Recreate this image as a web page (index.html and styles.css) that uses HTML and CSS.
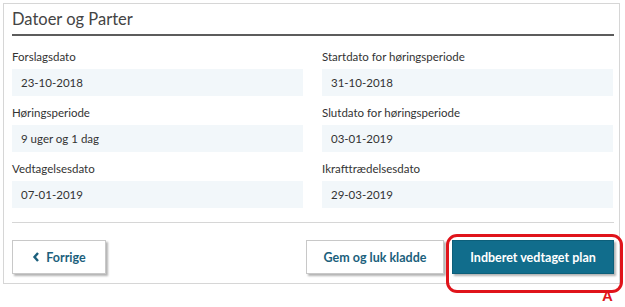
FILE: index.html
```html
<!DOCTYPE html>
<html lang="da">
<head>
    <meta charset="UTF-8">
    <title>Datoer og Parter</title>
    <link rel="stylesheet" href="styles.css">
</head>
<body>

    <div class="panel">
        <h2 class="panel-title">Datoer og Parter</h2>

        <div class="fields">
            <div class="field">
                <div class="field-label">Forslagsdato</div>
                <div class="field-value">23-10-2018</div>
            </div>
            <div class="field">
                <div class="field-label">Startdato for høringsperiode</div>
                <div class="field-value">31-10-2018</div>
            </div>
            <div class="field">
                <div class="field-label">Høringsperiode</div>
                <div class="field-value">9 uger og 1 dag</div>
            </div>
            <div class="field">
                <div class="field-label">Slutdato for høringsperiode</div>
                <div class="field-value">03-01-2019</div>
            </div>
            <div class="field">
                <div class="field-label">Vedtagelsesdato</div>
                <div class="field-value">07-01-2019</div>
            </div>
            <div class="field">
                <div class="field-label">Ikrafttrædelsesdato</div>
                <div class="field-value">29-03-2019</div>
            </div>
        </div>

        <!-- Knapper -->
        <div class="actions">
            <button class="btn btn-outline btn-back">
                <svg class="chevron" width="8" height="10" viewBox="0 0 8 10"><path d="M6 1 L2.5 5 L6 9" fill="none" stroke="currentColor" stroke-width="2.4"/></svg>
                Forrige
            </button>
            <div class="actions-right">
                <button class="btn btn-outline">Gem og luk kladde</button>
                <div class="highlight-wrap">
                    <button class="btn btn-primary">Indberet vedtaget plan</button>
                    <div class="highlight"></div>
                    <span class="highlight-label">A</span>
                </div>
            </div>
        </div>
    </div>

</body>
</html>
```

FILE: styles.css
```css
html, body {
    height: 307px;
}
body {
    margin: 0;
    background-color: #ffffff;
    font-family: 'Lato', 'Noto Sans', sans-serif;
    color: #333;
}
.panel {
    margin: 3px;
    width: 617px;
    height: 281px;
    box-sizing: border-box;
    border: 1px solid #d6d6d6;
    padding: 0 5px 0 8px;
}
.panel-title {
    margin: 0;
    font-size: 16.5px;
    font-weight: 400;
    color: #444;
    line-height: 20px;
    padding-top: 5px;
    padding-bottom: 5px;
    border-bottom: 2px solid #5c5c5c;
}
.fields {
    display: grid;
    grid-template-columns: 291px 291px;
    column-gap: 19px;
    row-gap: 10px;
    margin-top: 14px;
    padding-bottom: 14px;
    border-bottom: 1px solid #d6d6d6;
}
.field-label {
    font-size: 11.5px;
    line-height: 14px;
    color: #333;
    margin-bottom: 5px;
}
.field-value {
    height: 27px;
    line-height: 27px;
    background-color: #f2f7fa;
    padding-left: 9px;
    font-size: 11.5px;
    color: #333;
}
.actions {
    display: flex;
    justify-content: space-between;
    margin-top: 17px;
}
.actions-right {
    display: flex;
    gap: 8px;
}
.btn {
    height: 34px;
    box-sizing: border-box;
    font-family: 'Lato', 'Noto Sans', sans-serif;
    font-weight: 700;
    font-size: 12.5px;
    cursor: pointer;
    box-shadow: 2px 2px 2px rgba(0, 0, 0, 0.3);
}
.btn-outline {
    background-color: #fff;
    border: 1px solid #c8c8c8;
    color: #1b5f7c;
}
.btn-back {
    width: 94px;
    display: flex;
    align-items: center;
    justify-content: center;
    gap: 6px;
}
.actions-right .btn-outline {
    width: 138px;
}
.btn-primary {
    width: 162px;
    background-color: #116d8c;
    border: 1px solid #0d5f7a;
    color: #fff;
}
.highlight-wrap {
    position: relative;
    height: 34px;
}
.highlight {
    position: absolute;
    left: -6px;
    top: -6px;
    width: 177px;
    height: 59px;
    box-sizing: border-box;
    border: 3px solid #e0141b;
    border-radius: 11px;
}
.highlight-label {
    position: absolute;
    left: 150px;
    top: 48px;
    line-height: 15px;
    font-family: 'Liberation Sans', sans-serif;
    font-weight: 700;
    font-size: 15px;
    color: #e0141b;
}
```
